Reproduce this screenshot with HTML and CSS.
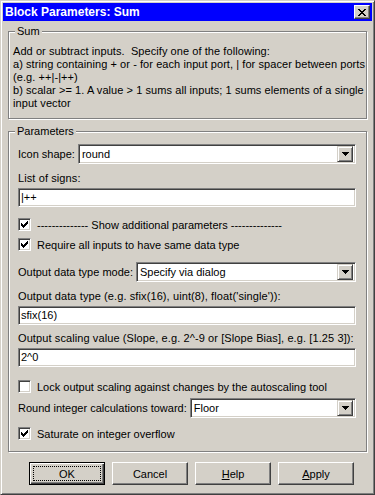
FILE: index.html
```html
<!DOCTYPE html>
<html>
<head>
    <meta charset="utf-8">
    <title>Block Parameters: Sum</title>
    <link rel="stylesheet" href="styles.css">
</head>
<body>
<div class="window">
    <div class="titlebar">
        <span class="title">Block Parameters: Sum</span>
        <span class="close-btn">
            <svg width="8" height="7" viewBox="0 0 8 7" shape-rendering="crispEdges"><path d="M0 0h2v1H0zM6 0h2v1H6zM1 1h2v1H1zM5 1h2v1H5zM2 2h4v1H2zM3 3h2v1H3zM2 4h4v1H2zM1 5h2v1H1zM5 5h2v1H5zM0 6h2v1H0zM6 6h2v1H6z"/></svg>
        </span>
    </div>

    <div class="client">
        <div class="group">
            <div class="group-title">Sum</div>
            <p class="desc">Add or subtract inputs.&nbsp; Specify one of the following:<br>
            a) string containing + or - for each input port, | for spacer between ports<br>
            (e.g. ++|-|++)<br>
            b) scalar &gt;= 1. A value &gt; 1 sums all inputs; 1 sums elements of a single<br>
            input vector</p>
        </div>

        <div class="group params">
            <div class="group-title">Parameters</div>

            <div class="row mt6">
                <span class="lbl">Icon shape:</span>
                <div class="combo"><span class="combo-text">round</span><span class="combo-btn"><svg width="7" height="4" viewBox="0 0 7 4" shape-rendering="crispEdges"><path d="M0 0h7v1H0zM1 1h5v1H1zM2 2h3v1H2zM3 3h1v1H3z"/></svg></span></div>
            </div>

            <div class="text-line mt8">List of signs:</div>
            <div class="edit mt3">|++</div>

            <div class="check-row mt11">
                <span class="checkbox"><svg width="7" height="7" viewBox="0 0 7 7" shape-rendering="crispEdges"><path d="M6 0h1v1H6zM5 1h2v1H5zM0 2h1v1H0zM4 2h3v1H4zM0 3h2v1H0zM3 3h3v1H3zM0 4h5v1H0zM1 5h3v1H1zM2 6h1v1H2z"/></svg></span>
                <span>-------------- Show additional parameters --------------</span>
            </div>
            <div class="check-row mt7">
                <span class="checkbox"><svg width="7" height="7" viewBox="0 0 7 7" shape-rendering="crispEdges"><path d="M6 0h1v1H6zM5 1h2v1H5zM0 2h1v1H0zM4 2h3v1H4zM0 3h2v1H0zM3 3h3v1H3zM0 4h5v1H0zM1 5h3v1H1zM2 6h1v1H2z"/></svg></span>
                <span>Require all inputs to have same data type</span>
            </div>

            <div class="row mt11">
                <span class="lbl">Output data type mode:</span>
                <div class="combo"><span class="combo-text">Specify via dialog</span><span class="combo-btn"><svg width="7" height="4" viewBox="0 0 7 4" shape-rendering="crispEdges"><path d="M0 0h7v1H0zM1 1h5v1H1zM2 2h3v1H2zM3 3h1v1H3z"/></svg></span></div>
            </div>

            <div class="text-line mt8">Output data type (e.g. sfix(16), uint(8), float('single')):</div>
            <div class="edit mt3">sfix(16)</div>

            <div class="text-line mt7">Output scaling value (Slope, e.g. 2^-9 or [Slope Bias], e.g. [1.25 3]):</div>
            <div class="edit mt3">2^0</div>

            <div class="check-row mt13">
                <span class="checkbox"></span>
                <span>Lock output scaling against changes by the autoscaling tool</span>
            </div>

            <div class="row mt5">
                <span class="lbl">Round integer calculations toward:</span>
                <div class="combo"><span class="combo-text">Floor</span><span class="combo-btn"><svg width="7" height="4" viewBox="0 0 7 4" shape-rendering="crispEdges"><path d="M0 0h7v1H0zM1 1h5v1H1zM2 2h3v1H2zM3 3h1v1H3z"/></svg></span></div>
            </div>

            <div class="check-row mt9">
                <span class="checkbox"><svg width="7" height="7" viewBox="0 0 7 7" shape-rendering="crispEdges"><path d="M6 0h1v1H6zM5 1h2v1H5zM0 2h1v1H0zM4 2h3v1H4zM0 3h2v1H0zM3 3h3v1H3zM0 4h5v1H0zM1 5h3v1H1zM2 6h1v1H2z"/></svg></span>
                <span>Saturate on integer overflow</span>
            </div>
        </div>

        <div class="buttons">
            <button class="btn default"><span class="focus">OK</span></button>
            <button class="btn">Cancel</button>
            <button class="btn"><u>H</u>elp</button>
            <button class="btn"><u>A</u>pply</button>
        </div>
    </div>
</div>
</body>
</html>
```

FILE: styles.css
```css
body
{
    margin: 0;
    font-family: "Liberation Sans", Arial, sans-serif;
    font-size: 11px;
    color: #000;
}
.window
{
    width: 375px;
    height: 495px;
    box-sizing: border-box;
    background: #d4d0c8;
    border: 1px solid;
    border-color: #d4d0c8 #404040 #404040 #d4d0c8;
    box-shadow: inset 1px 1px #fff, inset -1px -1px #808080;
    padding: 2px;
}
.titlebar
{
    height: 18px;
    background: #0000ff;
    display: flex;
    align-items: center;
    justify-content: space-between;
}
.title
{
    color: #fff;
    font-weight: bold;
    font-size: 12px;
    padding-left: 2px;
}
.close-btn
{
    width: 16px;
    height: 14px;
    box-sizing: border-box;
    margin-right: 2px;
    background: #d4d0c8;
    border: 1px solid;
    border-color: #fff #404040 #404040 #fff;
    box-shadow: inset -1px -1px #808080;
    display: flex;
    align-items: center;
    justify-content: center;
}
.client
{
    padding: 0 5px;
}
.group
{
    border: 1px solid #808080;
    box-shadow: inset 1px 1px #fff, 1px 1px #fff;
    margin-top: 10px;
}
.group-title
{
    width: fit-content;
    margin: -7px 0 0 6px;
    padding: 0 2px;
    line-height: 13px;
    background: #d4d0c8;
}
.desc
{
    margin: 7px 0 8px 0;
    padding-left: 4px;
    line-height: 13px;
    letter-spacing: 0.07px;
    white-space: nowrap;
}
.params
{
    margin-top: 12px;
    padding: 0 10px 11px 9px;
}
.params .group-title
{
    margin-left: -3px;
}
.row
{
    display: flex;
    align-items: center;
    height: 20px;
}
.lbl
{
    margin-right: 3px;
    white-space: nowrap;
}
.combo, .edit
{
    box-sizing: border-box;
    background: #fff;
    border: 1px solid;
    border-color: #808080 #fff #fff #808080;
    box-shadow: inset 1px 1px #404040, inset -1px -1px #d4d0c8;
}
.combo
{
    flex: 1;
    height: 20px;
    display: flex;
    align-items: center;
    padding: 2px;
}
.combo-text
{
    flex: 1;
    padding-left: 1px;
}
.combo-btn
{
    width: 16px;
    height: 16px;
    box-sizing: border-box;
    background: #d4d0c8;
    border: 1px solid;
    border-color: #d4d0c8 #404040 #404040 #d4d0c8;
    box-shadow: inset 1px 1px #fff, inset -1px -1px #808080;
    display: flex;
    align-items: center;
    justify-content: center;
}
.edit
{
    height: 19px;
    line-height: 17px;
    padding-left: 2px;
}
.text-line
{
    line-height: 13px;
    letter-spacing: 0.1px;
    white-space: nowrap;
}
.check-row
{
    display: flex;
    align-items: center;
    height: 13px;
    white-space: nowrap;
}
.checkbox
{
    width: 13px;
    height: 13px;
    box-sizing: border-box;
    margin-right: 6px;
    background: #fff;
    border: 1px solid;
    border-color: #808080 #fff #fff #808080;
    box-shadow: inset 1px 1px #404040, inset -1px -1px #d4d0c8;
    display: flex;
    align-items: center;
    justify-content: center;
}
.mt3 { margin-top: 3px; }
.mt5 { margin-top: 5px; }
.mt6 { margin-top: 6px; }
.mt7 { margin-top: 7px; }
.mt8 { margin-top: 8px; }
.mt9 { margin-top: 9px; }
.mt11 { margin-top: 11px; }
.mt13 { margin-top: 13px; }
.buttons
{
    display: flex;
    gap: 7px;
    margin-top: 10px;
    padding-left: 21px;
}
.btn
{
    width: 76px;
    height: 23px;
    margin: 0;
    padding: 0;
    font: inherit;
    color: #000;
    background: #d4d0c8;
    border: 1px solid;
    border-color: #fff #404040 #404040 #fff;
    box-shadow: inset -1px -1px #808080;
    display: flex;
    align-items: center;
    justify-content: center;
}
.btn.default
{
    border: 1px solid #000;
    box-shadow: inset 1px 1px #fff, inset -1px -1px #404040, inset -2px -2px #808080;
}
.focus
{
    flex: 1;
    align-self: stretch;
    margin: 3px;
    border: 1px dotted #000;
    display: flex;
    align-items: center;
    justify-content: center;
}
```
